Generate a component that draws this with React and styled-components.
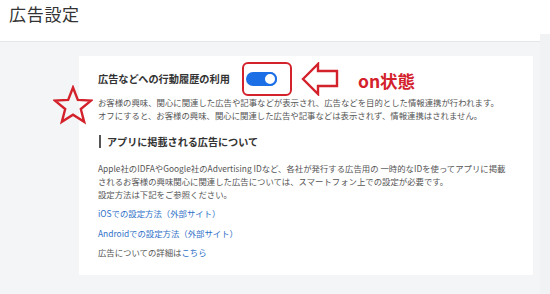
import React from "react";
import styled, { createGlobalStyle } from "styled-components";

const Global = createGlobalStyle`
  html, body { margin: 0; padding: 0; }
  body {
    background: #f4f5f7;
    font-family: "Noto Sans CJK JP", "Noto Sans", sans-serif;
    color: #444;
    width: 550px;
    height: 294px;
    overflow: hidden;
  }
`;

const Page = styled.div`
  position: relative;
  width: 550px;
  height: 294px;
  display: flex;
  flex-direction: column;
`;

const Header = styled.header`
  height: 42px;
  background: #fff;
  border-bottom: 1px solid #e4e6ea;
  display: flex;
  align-items: flex-start;
  padding: 3px 0 0 9px;
  box-sizing: border-box;
  flex-shrink: 0;
`;

const Title = styled.h1`
  margin: 0;
  font-size: 17px;
  font-weight: 400;
  letter-spacing: 0.7px;
  line-height: 22px;
  color: #333;
`;

const Scrollbar = styled.div`
  position: absolute;
  right: 0;
  top: 34px;
  bottom: 0;
  width: 10px;
  background: #f1f2f4;
`;

const Main = styled.main`
  position: relative;
  flex: 1;
  display: flex;
  padding: 14px 0 0 79px;
`;

const Card = styled.section`
  width: 454px;
  height: 219px;
  box-sizing: border-box;
  background: #fff;
  padding: 6px 19px 0 19px;
  display: flex;
  flex-direction: column;
`;

const SettingRow = styled.div`
  display: flex;
  align-items: center;
  height: 34px;
`;

const Heading = styled.h2`
  margin: 0;
  font-size: 10.2px;
  font-weight: 700;
  color: #333;
  line-height: 14px;
  white-space: nowrap;
`;

const Highlight = styled.div`
  margin-left: 12px;
  width: 50px;
  height: 34px;
  box-sizing: border-box;
  border: 2.5px solid #d3222b;
  border-radius: 6px;
  display: flex;
  align-items: center;
  padding-left: 2.5px;
`;

const Track = styled.button`
  position: relative;
  width: 31px;
  height: 14px;
  border: none;
  padding: 0;
  border-radius: 7px;
  background: ${(p) => (p.$on ? "#1d6fe6" : "#c3c7cd")};
  display: flex;
  align-items: center;
  justify-content: ${(p) => (p.$on ? "flex-end" : "flex-start")};
  cursor: pointer;
`;

const Knob = styled.span`
  width: 14px;
  height: 14px;
  box-sizing: border-box;
  border-radius: 50%;
  background: #fff;
  border: 2px solid #1d6fe6;
`;

const ArrowIcon = styled.svg`
  margin-left: 9px;
  flex-shrink: 0;
`;

const OnLabel = styled.span`
  margin-left: 19px;
  font-size: 17.5px;
  font-weight: 700;
  color: #d3222b;
  line-height: 22px;
  white-space: nowrap;
  position: relative;
  top: 2px;
`;

const TextBlock = styled.div`
  margin-top: ${(p) => p.$mt || 0}px;
  font-size: 8.4px;
  line-height: 13px;
  color: ${(p) => p.$color || "#555"};
`;

const Line = styled.div`
  white-space: nowrap;
`;

const SubHeading = styled.h3`
  margin: 11px 0 0 1px;
  display: flex;
  align-items: center;
  height: 16px;
  font-size: 10.1px;
  font-weight: 700;
  color: #333;
  white-space: nowrap;
  &::before {
    content: "";
    width: 2px;
    height: 13px;
    background: #555;
    margin-right: 6px;
  }
`;

const LinkLine = styled.div`
  margin-top: ${(p) => p.$mt}px;
  font-size: 8.4px;
  line-height: 13px;
  color: #555;
  white-space: nowrap;
`;

const Link = styled.a`
  color: #2e6fc7;
  text-decoration: none;
`;

const StarMark = styled.svg`
  position: absolute;
  left: 53px;
  top: 43px;
`;

function starPoints(cx, cy, R, r) {
  const pts = [];
  for (let i = 0; i < 10; i++) {
    const rad = i % 2 === 0 ? R : r;
    const a = -Math.PI / 2 + (i * Math.PI) / 5;
    pts.push(`${(cx + rad * Math.cos(a)).toFixed(2)},${(cy + rad * Math.sin(a)).toFixed(2)}`);
  }
  return pts.join(" ");
}

export default function App() {
  return (
    <>
      <Global />
      <Page>
        <Header>
          <Title>広告設定</Title>
        </Header>
        <Main>
          <Card>
            <SettingRow>
              <Heading>広告などへの行動履歴の利用</Heading>
              <Highlight>
                <Track $on aria-label="広告などへの行動履歴の利用">
                  <Knob />
                </Track>
              </Highlight>
              <ArrowIcon width="38" height="34" viewBox="0 0 38 34">
                <polygon
                  points="2,17 17,2 17,9 36,9 36,24 17,24 17,32"
                  fill="none"
                  stroke="#d3222b"
                  strokeWidth="2.4"
                  strokeLinejoin="miter"
                />
              </ArrowIcon>
              <OnLabel>on状態</OnLabel>
            </SettingRow>
            <TextBlock>
              <Line>お客様の興味、関心に関連した広告や記事などが表示され、広告などを目的とした情報連携が行われます。</Line>
              <Line>オフにすると、お客様の興味、関心に関連した広告や記事などは表示されず、情報連携はされません。</Line>
            </TextBlock>
            <SubHeading>アプリに掲載される広告について</SubHeading>
            <TextBlock $mt={13}>
              <Line>Apple社のIDFAやGoogle社のAdvertising IDなど、各社が発行する広告用の 一時的なIDを使ってアプリに掲載</Line>
              <Line>されるお客様の興味関心に関連した広告については、スマートフォン上での設定が必要です。</Line>
              <Line>設定方法は下記をご参照ください。</Line>
            </TextBlock>
            <LinkLine $mt={6}>
              <Link href="#">iOSでの設定方法（外部サイト）</Link>
            </LinkLine>
            <LinkLine $mt={7}>
              <Link href="#">Androidでの設定方法（外部サイト）</Link>
            </LinkLine>
            <LinkLine $mt={6}>
              広告についての詳細は<Link href="#">こちら</Link>
            </LinkLine>
          </Card>
          <StarMark width="40" height="40" viewBox="0 0 40 40">
            <polygon
              points={starPoints(20, 21.5, 19, 8.2)}
              fill="none"
              stroke="#d3222b"
              strokeWidth="2.4"
              strokeLinejoin="miter"
            />
          </StarMark>
        </Main>
        <Scrollbar />
      </Page>
    </>
  );
}
